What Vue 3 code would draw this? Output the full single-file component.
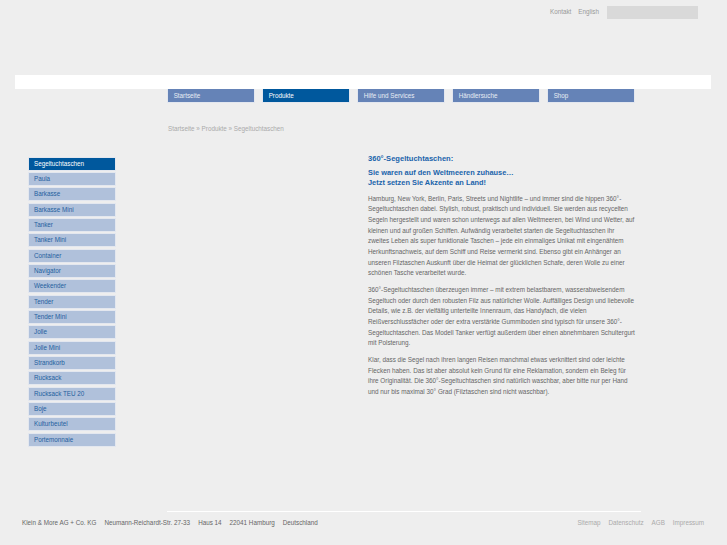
<template>
  <div class="page">
    <header class="top">
      <a>Kontakt</a>
      <a>English</a>
      <div class="search"></div>
    </header>
    <div class="bar"></div>
    <nav class="tabs">
      <a v-for="tab in tabs" :key="tab" :class="{ active: tab === 'Produkte' }">{{ tab }}</a>
    </nav>
    <div class="crumbs">Startseite » Produkte » Segeltuchtaschen</div>
    <div class="main">
      <ul class="side">
        <li v-for="item in items" :key="item" :class="{ active: item === 'Segeltuchtaschen' }">{{ item }}</li>
      </ul>
      <article class="text">
        <h1>360°-Segeltuchtaschen:</h1>
        <h2>Sie waren auf den Weltmeeren zuhause…<br>Jetzt setzen Sie Akzente an Land!</h2>
        <p>Hamburg, New York, Berlin, Paris, Streets und Nightlife – und immer sind die hippen 360°-<br>Segeltuchtaschen dabei. Stylish, robust, praktisch und individuell. Sie werden aus recycelten<br>Segeln hergestellt und waren schon unterwegs auf allen Weltmeeren, bei Wind und Wetter, auf<br>kleinen und auf großen Schiffen. Aufwändig verarbeitet starten die Segeltuchtaschen ihr<br>zweites Leben als super funktionale Taschen – jede ein einmaliges Unikat mit eingenähtem<br>Herkunftsnachweis, auf dem Schiff und Reise vermerkt sind. Ebenso gibt ein Anhänger an<br>unseren Filztaschen Auskunft über die Heimat der glücklichen Schafe, deren Wolle zu einer<br>schönen Tasche verarbeitet wurde.</p>
        <p>360°-Segeltuchtaschen überzeugen immer – mit extrem belastbarem, wasserabweisendem<br>Segeltuch oder durch den robusten Filz aus natürlicher Wolle. Auffälliges Design und liebevolle<br>Details, wie z.B. der vielfältig unterteilte Innenraum, das Handyfach, die vielen<br>Reißverschlussfächer oder der extra verstärkte Gummiboden sind typisch für unsere 360°-<br>Segeltuchtaschen. Das Modell Tanker verfügt außerdem über einen abnehmbaren Schultergurt<br>mit Polsterung.</p>
        <p>Klar, dass die Segel nach ihren langen Reisen manchmal etwas verknittert sind oder leichte<br>Flecken haben. Das ist aber absolut kein Grund für eine Reklamation, sondern ein Beleg für<br>ihre Originalität. Die 360°-Segeltuchtaschen sind natürlich waschbar, aber bitte nur per Hand<br>und nur bis maximal 30° Grad (Filztaschen sind nicht waschbar).</p>
      </article>
    </div>
    <footer class="foot">
      <div class="rule"></div>
      <div class="row">
        <div class="address">
          <span>Klein &amp; More AG + Co. KG</span>
          <span>Neumann-Reichardt-Str. 27-33</span>
          <span>Haus 14</span>
          <span>22041 Hamburg</span>
          <span>Deutschland</span>
        </div>
        <div class="links">
          <a>Sitemap</a>
          <a>Datenschutz</a>
          <a>AGB</a>
          <a>Impressum</a>
        </div>
      </div>
    </footer>
  </div>
</template>

<script setup>
const tabs = ['Startseite', 'Produkte', 'Hilfe und Services', 'Händlersuche', 'Shop'];

const items = [
  'Segeltuchtaschen', 'Paula', 'Barkasse', 'Barkasse Mini', 'Tanker', 'Tanker Mini',
  'Container', 'Navigator', 'Weekender', 'Tender', 'Tender Mini', 'Jolle', 'Jolle Mini',
  'Strandkorb', 'Rucksack', 'Rucksack TEU 20', 'Boje', 'Kulturbeutel', 'Portemonnaie'
];
</script>

<style>
html, body {
  background: #eeeeee;
}
</style>

<style scoped>
.page {
  width: 727px;
  height: 545px;
  overflow: hidden;
  display: flex;
  flex-direction: column;
  font-family: "Liberation Sans", Arial, sans-serif;
  font-size: 6.3px;
  color: #666;
}

.top {
  height: 75px;
  flex: none;
  box-sizing: border-box;
  padding: 6px 29px 0 0;
  display: flex;
  justify-content: flex-end;
  gap: 7px;
  color: #999;
  line-height: 12px;
}

.search {
  width: 91px;
  height: 13px;
  margin-left: 1px;
  background: #d9d9d9;
}

.bar {
  height: 14px;
  flex: none;
  margin: 0 16px 0 15px;
  background: #fff;
}

.tabs {
  display: flex;
  flex: none;
  gap: 7px;
  padding-left: 166.67px;
}

.tabs a {
  width: 88px;
  height: 14px;
  box-sizing: border-box;
  padding-left: 6px;
  line-height: 13px;
  background: #6583b7;
  border: 1px solid #e3e7ef;
  border-top: 0;
  color: #e8edf5;
}

.tabs a.active {
  background: #00589d;
  color: #fff;
}

.crumbs {
  flex: none;
  margin-top: 21px;
  padding-left: 168px;
  line-height: 10px;
  color: #aaa;
}

.main {
  display: flex;
  flex: none;
  margin-top: 22.67px;
  padding-left: 28px;
}

.side {
  width: 88px;
  margin: 0;
  padding: 0;
  list-style: none;
}

.side li {
  height: 14px;
  margin-bottom: 1.33px;
  box-sizing: border-box;
  padding-left: 5px;
  line-height: 12px;
  background: #b0c1db;
  border: 1px solid #e3e7ef;
  color: #1f5f9e;
}

.side li.active {
  background: #00589d;
  color: #fff;
}

.text {
  margin-left: 252px;
  margin-top: -3px;
  width: 290px;
  font-size: 6.35px;
  line-height: 10.67px;
}

.text h1,
.text h2 {
  margin: 0;
  font-size: 7.4px;
  line-height: 10.67px;
  font-weight: bold;
  color: #1a64ab;
}

.text h1 {
  font-size: 7.55px;
  margin-bottom: 3.33px;
}

.text h2 {
  margin-bottom: 4.67px;
}

.text p {
  margin: 0 0 6px;
}

.foot {
  margin-top: auto;
  height: 34px;
  flex: none;
}

.rule {
  height: 1.33px;
  width: 474px;
  margin-left: 167px;
  background: #fff;
}

.row {
  display: flex;
  justify-content: space-between;
  padding: 6px 23px 0 22px;
  line-height: 10px;
}

.address,
.links {
  display: flex;
  gap: 8px;
}

.links {
  color: #aaa;
}
</style>
